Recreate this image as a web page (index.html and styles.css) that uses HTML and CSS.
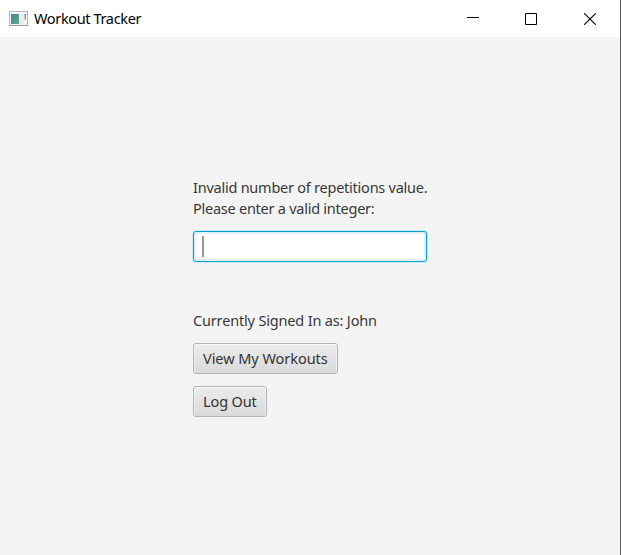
FILE: index.html
```html
<!DOCTYPE html>
<html lang="en">
<head>
<meta charset="utf-8">
<title>Workout Tracker</title>
<link rel="stylesheet" href="styles.css">
</head>
<body>
<div class="window">
  <header class="titlebar">
    <svg class="app-icon" width="19" height="16" viewBox="0 0 19 16">
      <defs>
        <linearGradient id="screen" x1="0" y1="0" x2="1" y2="1">
          <stop offset="0" stop-color="#4b7f9e"/>
          <stop offset="1" stop-color="#5bb082"/>
        </linearGradient>
        <linearGradient id="strip" x1="0" y1="0" x2="0" y2="1">
          <stop offset="0" stop-color="#5b8fae"/>
          <stop offset="1" stop-color="#8fd09c"/>
        </linearGradient>
      </defs>
      <rect x=".5" y=".5" width="18" height="14" fill="#f4f5f7" stroke="#b3b8bd"/>
      <path d="M0 14.5h19" stroke="#93989d"/>
      <rect x="2" y="3" width="8" height="10" fill="url(#screen)"/>
      <rect x="11" y="3" width="4" height="10" fill="#e9ebed"/>
      <rect x="15.5" y="3" width="1.5" height="6" fill="url(#strip)"/>
    </svg>
    <h1 class="title">Workout Tracker</h1>
    <div class="controls">
      <svg width="12" height="12" viewBox="0 0 12 12"><path d="M0 4.5h12" stroke="#000"/></svg>
      <svg width="12" height="12" viewBox="0 0 12 12"><path d="M.5.5h11v11H.5z" fill="none" stroke="#000"/></svg>
      <svg class="close" width="12" height="12" viewBox="0 0 12 12"><path d="M.2.2l11.6 11.6M11.8.2L.2 11.8" stroke="#000" stroke-width="1.1"/></svg>
    </div>
  </header>
  <main class="content">
    <label class="prompt" for="reps"><span class="line-one">Invalid number of repetitions value.</span><br><span class="line-two">Please enter a valid integer:</span></label>
    <div class="field" id="reps"><span class="caret"></span></div>
    <p class="status">Currently Signed In as: John</p>
    <button class="button workouts">View My Workouts</button>
    <button class="button logout">Log Out</button>
  </main>
</div>
</body>
</html>
```
FILE: styles.css
```css
* { box-sizing: border-box; }

body {
  margin: 0;
  font-family: "Noto Sans", "Open Sans", sans-serif;
  font-size: 14.5px;
  color: #383838;
}

.window {
  width: 621px;
  height: 555px;
  background: #f4f4f4;
  border-right: 1px solid #5c5c5c;
}

.titlebar {
  display: flex;
  align-items: center;
  height: 37px;
  padding: 0 24px 0 9px;
  background: #fff;
}

.app-icon { margin-right: 6px; }

.title {
  margin: 0;
  padding-bottom: 2px;
  font-size: 14.5px;
  font-weight: 400;
  color: #000;
  letter-spacing: -0.36px;
}

.controls {
  display: flex;
  gap: 46px;
  margin-left: auto;
}

.controls svg { display: block; }
.controls .close { margin-left: 1px; }

.content {
  display: flex;
  flex-direction: column;
  align-items: flex-start;
  width: 234px;
  margin-left: 193px;
  padding-top: 140px;
}

.prompt {
  line-height: 21px;
  white-space: nowrap;
}

.line-one { letter-spacing: -0.24px; }
.line-two { letter-spacing: -0.25px; }

.field {
  width: 234px;
  height: 31px;
  margin-top: 12px;
  padding: 4px 8px;
  background: #fff;
  border: 1px solid #039ed3;
  border-radius: 3px;
  box-shadow: 0 0 0 1px #cfe9f2, inset 0 0 0 2px #def1f8;
}

.caret {
  display: block;
  width: 2px;
  height: 21px;
  background: #969696;
}

.status {
  margin: 48px 0 12px;
  line-height: 21px;
  letter-spacing: -0.17px;
  white-space: nowrap;
}

.button {
  height: 31px;
  margin: 0 0 12px;
  padding: 0 0 1px 9px;
  border: 1px solid #b5b5b5;
  border-radius: 3px;
  background: linear-gradient(#ececec, #dadada);
  box-shadow: inset 0 1px #f8f8f8, inset 1px 0 #efefef, inset -1px 0 #efefef;
  font: inherit;
  color: #333;
  text-align: left;
  white-space: nowrap;
}

.workouts {
  width: 145px;
  letter-spacing: -0.05px;
}

.logout {
  width: 74px;
  letter-spacing: -0.12px;
}
```
